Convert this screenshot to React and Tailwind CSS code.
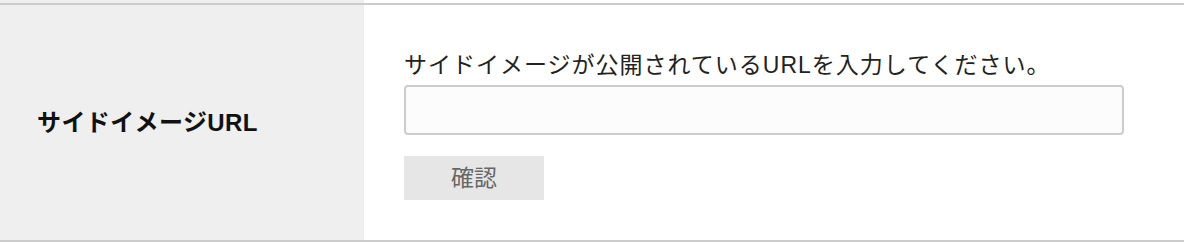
export default function App() {
  return (
    <div className="w-[1184px] h-[242px] bg-white font-['Liberation_Sans','Noto_Sans_CJK_JP',sans-serif] text-[#222]">
      <div className="flex h-[3px]">
        <div className="w-[364px] bg-[#efefef]" />
        <div className="flex-1" />
      </div>
      <div className="flex h-[239px] border-y-2 border-[#cccccc]">
        <div className="w-[364px] shrink-0 bg-[#efefef] flex items-center pl-[37px]">
          <span className="text-[24px] font-bold leading-[30px] tracking-[0.4px] text-[#111]">サイドイメージURL</span>
        </div>
        <div className="flex-1 pl-[40px] pt-[45px]">
          <p className="text-[23px] leading-[30px] tracking-[1px] mb-[5px]">
            サイドイメージが公開されているURLを入力してください。
          </p>
          <input
            type="text"
            className="block w-[720px] h-[50px] rounded-[4px] border-2 border-[#cccccc] bg-[#fcfcfc] px-3 outline-none"
          />
          <button className="mt-[21px] w-[140px] h-[44px] bg-[#e6e6e6] text-[23px] text-[#666] flex items-center justify-center">
            確認
          </button>
        </div>
      </div>
    </div>
  )
}
